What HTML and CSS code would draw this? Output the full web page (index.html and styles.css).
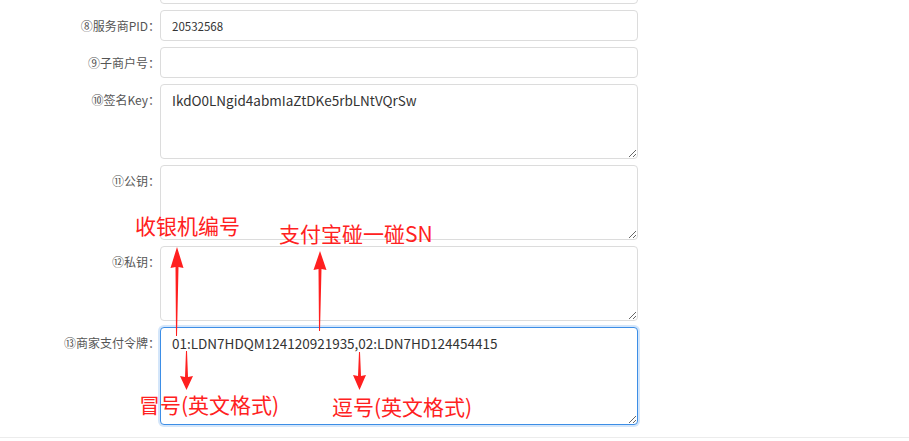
FILE: index.html
```html
<!DOCTYPE html>
<html lang="zh-CN">
<head>
<meta charset="utf-8">
<title>支付配置</title>
<link rel="stylesheet" href="styles.css">
</head>
<body>
<div class="page">
  <form class="form">
    <div class="row">
      <label class="label"></label>
      <input class="field" type="text" value="">
    </div>
    <div class="row">
      <label class="label">⑧服务商PID：</label>
      <input class="field" type="text" value="20532568">
    </div>
    <div class="row">
      <label class="label">⑨子商户号：</label>
      <input class="field" type="text" value="">
    </div>
    <div class="row">
      <label class="label">⑩签名Key：</label>
      <textarea class="field area">IkdO0LNgid4abmIaZtDKe5rbLNtVQrSw</textarea>
    </div>
    <div class="row">
      <label class="label">⑪公钥：</label>
      <textarea class="field area"></textarea>
    </div>
    <div class="row">
      <label class="label">⑫私钥：</label>
      <textarea class="field area"></textarea>
    </div>
    <div class="row">
      <label class="label">⑬商家支付令牌：</label>
      <textarea class="field area tall focus">01:LDN7HDQM124120921935,02:LDN7HD124454415</textarea>
    </div>
  </form>
  <div class="footer"></div>

  <svg class="arrows" width="909" height="441" viewBox="0 0 909 441">
    <polygon points="177,247 183.5,268 178.5,267 177,336 176,336 175.5,267 170.5,268" />
    <polygon points="320,251 326.5,270 321.5,269 320,331 319,331 318.5,269 313.5,270" />
    <polygon points="186.5,390 193,376 188,377 187,351 186,351 185,377 180,376" />
    <polygon points="359.5,390 366,375 361,376 360,352 359,352 358,376 353,375" />
  </svg>
  <div class="note n1">收银机编号</div>
  <div class="note n2">支付宝碰一碰SN</div>
  <div class="note n3">冒号(英文格式)</div>
  <div class="note n4">逗号(英文格式)</div>
</div>
</body>
</html>
```
FILE: styles.css
```css
html, body {
  margin: 0;
  padding: 0;
  background: #fff;
}
body {
  font-family: "Noto Sans CJK SC", "Noto Sans", sans-serif;
  color: #333;
  width: 909px;
  height: 441px;
  overflow: hidden;
}
.page {
  position: relative;
  display: flow-root;
  width: 909px;
  height: 441px;
}
.form {
  margin: -27px 0 0 0;
  display: flex;
  flex-direction: column;
  gap: 6px;
}
.row {
  display: grid;
  grid-template-columns: 160px 478px;
  align-items: start;
}
.label {
  text-align: right;
  font-size: 12px;
  line-height: 31px;
  color: #555;
  white-space: nowrap;
}
.field {
  box-sizing: border-box;
  width: 478px;
  height: 31px;
  margin: 0;
  padding: 0 11px;
  border: 1px solid #dcdcdc;
  border-radius: 4px;
  font-family: "Noto Sans CJK SC", "Noto Sans", sans-serif;
  font-size: 11.5px;
  color: #333;
  background: #fff;
  outline: none;
}
.area {
  height: 75px;
  padding: 5px 11px;
  font-size: 13.5px;
  line-height: 20px;
  resize: vertical;
}
.tall {
  height: 98px;
}
.focus {
  border-color: #3d8ee6;
  box-shadow: 0 0 0 2px rgba(61, 142, 230, 0.22);
}
.footer {
  margin-top: 12px;
  border-top: 1px solid #ececec;
}
.arrows {
  position: absolute;
  left: 0;
  top: 0;
  pointer-events: none;
}
.arrows polygon {
  fill: #ff1f1f;
}
.note {
  position: absolute;
  font-family: "Noto Sans CJK SC", sans-serif;
  font-size: 21px;
  line-height: 21px;
  color: #ff2121;
  white-space: nowrap;
}
.n1 { left: 135px; top: 215px; }
.n2 { left: 279px; top: 223px; }
.n3 { left: 139px; top: 394px; }
.n4 { left: 332px; top: 396px; }
```
